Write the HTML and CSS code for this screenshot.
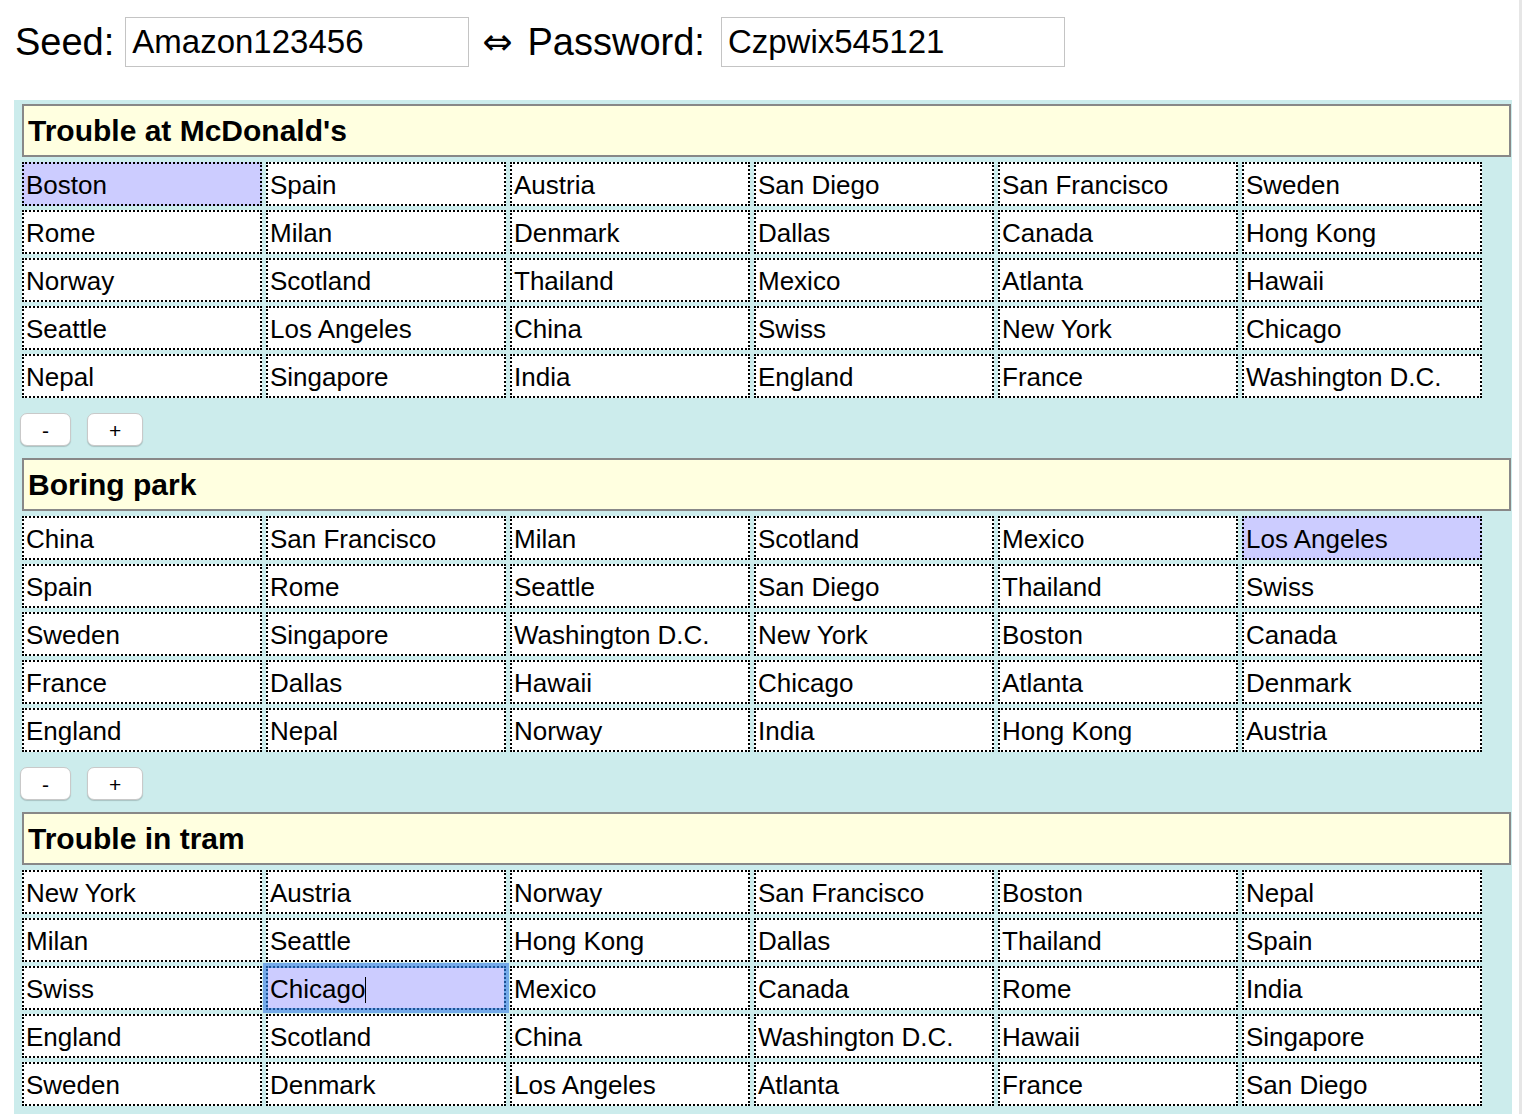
FILE: index.html
```html
<!DOCTYPE html>
<html lang="en">
<head>
<meta charset="utf-8">
<title>Seed to Password</title>
<link rel="stylesheet" href="styles.css">
</head>
<body>
<div class="topbar">
  <span class="label label-seed">Seed:</span>
  <div class="field">Amazon123456</div>
  <span class="arrow">⇔</span>
  <span class="label label-pw">Password:</span>
  <div class="field">Czpwix545121</div>
</div>

<div class="board">
  <section class="story">
    <h2 class="story-title">Trouble at McDonald's</h2>
    <div class="grid">
      <div class="cell selected">Boston</div><div class="cell">Spain</div><div class="cell">Austria</div><div class="cell">San Diego</div><div class="cell">San Francisco</div><div class="cell">Sweden</div>
      <div class="cell">Rome</div><div class="cell">Milan</div><div class="cell">Denmark</div><div class="cell">Dallas</div><div class="cell">Canada</div><div class="cell">Hong Kong</div>
      <div class="cell">Norway</div><div class="cell">Scotland</div><div class="cell">Thailand</div><div class="cell">Mexico</div><div class="cell">Atlanta</div><div class="cell">Hawaii</div>
      <div class="cell">Seattle</div><div class="cell">Los Angeles</div><div class="cell">China</div><div class="cell">Swiss</div><div class="cell">New York</div><div class="cell">Chicago</div>
      <div class="cell">Nepal</div><div class="cell">Singapore</div><div class="cell">India</div><div class="cell">England</div><div class="cell">France</div><div class="cell">Washington D.C.</div>
    </div>
    <div class="controls"><button class="btn">-</button><button class="btn">+</button></div>
  </section>

  <section class="story">
    <h2 class="story-title">Boring park</h2>
    <div class="grid">
      <div class="cell">China</div><div class="cell">San Francisco</div><div class="cell">Milan</div><div class="cell">Scotland</div><div class="cell">Mexico</div><div class="cell selected">Los Angeles</div>
      <div class="cell">Spain</div><div class="cell">Rome</div><div class="cell">Seattle</div><div class="cell">San Diego</div><div class="cell">Thailand</div><div class="cell">Swiss</div>
      <div class="cell">Sweden</div><div class="cell">Singapore</div><div class="cell">Washington D.C.</div><div class="cell">New York</div><div class="cell">Boston</div><div class="cell">Canada</div>
      <div class="cell">France</div><div class="cell">Dallas</div><div class="cell">Hawaii</div><div class="cell">Chicago</div><div class="cell">Atlanta</div><div class="cell">Denmark</div>
      <div class="cell">England</div><div class="cell">Nepal</div><div class="cell">Norway</div><div class="cell">India</div><div class="cell">Hong Kong</div><div class="cell">Austria</div>
    </div>
    <div class="controls"><button class="btn">-</button><button class="btn">+</button></div>
  </section>

  <section class="story">
    <h2 class="story-title">Trouble in tram</h2>
    <div class="grid">
      <div class="cell">New York</div><div class="cell">Austria</div><div class="cell">Norway</div><div class="cell">San Francisco</div><div class="cell">Boston</div><div class="cell">Nepal</div>
      <div class="cell">Milan</div><div class="cell">Seattle</div><div class="cell">Hong Kong</div><div class="cell">Dallas</div><div class="cell">Thailand</div><div class="cell">Spain</div>
      <div class="cell">Swiss</div><div class="cell focused">Chicago<span class="caret"></span></div><div class="cell">Mexico</div><div class="cell">Canada</div><div class="cell">Rome</div><div class="cell">India</div>
      <div class="cell">England</div><div class="cell">Scotland</div><div class="cell">China</div><div class="cell">Washington D.C.</div><div class="cell">Hawaii</div><div class="cell">Singapore</div>
      <div class="cell">Sweden</div><div class="cell">Denmark</div><div class="cell">Los Angeles</div><div class="cell">Atlanta</div><div class="cell">France</div><div class="cell">San Diego</div>
    </div>
  </section>
</div>
<div class="scroll-edge"></div>
</body>
</html>
```

FILE: styles.css
```css
html, body {
  margin: 0;
  padding: 0;
  overflow: hidden;
  background: #fff;
}

body {
  padding: 0 10px 0 14px;
  font-family: "Liberation Sans", Arial, Helvetica, sans-serif;
  color: #000;
}

.topbar {
  display: flex;
  align-items: center;
  height: 50px;
  margin-top: 17px;
  padding-left: 1px;
}

.label {
  font-size: 38px;
  line-height: 1;
}

.label-seed { margin-right: 11px; }
.label-pw { margin-right: 16px; }

.arrow {
  font-family: "DejaVu Sans", sans-serif;
  font-size: 36px;
  line-height: 1;
  margin: 0 15px 0 13px;
}

.field {
  box-sizing: border-box;
  width: 344px;
  height: 50px;
  border: 1px solid #c4c4c4;
  padding-left: 6px;
  font-size: 33px;
  line-height: 48px;
  white-space: nowrap;
}

.board {
  margin-top: 33px;
  background: #ccecec;
  padding: 4px 1px 30px 0;
}

.story {
  display: flex;
  flex-direction: column;
}

.story-title {
  margin: 0 0 0 8px;
  box-sizing: border-box;
  height: 53px;
  border: 2px solid #888;
  background: #ffffe0;
  padding-left: 4px;
  font-size: 30px;
  font-weight: bold;
  line-height: 49px;
}

.grid {
  display: grid;
  grid-template-columns: repeat(6, 240px);
  grid-auto-rows: 44px;
  gap: 4px;
  margin: 5px 0 0 8px;
}

.cell {
  box-sizing: border-box;
  border: 2px dotted #000;
  background: #fff;
  padding: 2px 0 0 2px;
  font-size: 26px;
  line-height: 38px;
  white-space: nowrap;
  overflow: hidden;
}

.cell.selected {
  background: #ccccff;
}

.cell.focused {
  border-color: #1d4f93;
  background: linear-gradient(#ccccff, #ccccff) padding-box, #74aae9 border-box;
  box-shadow: 0 0 0 3px #74aae9;
  overflow: visible;
}

.caret {
  display: inline-block;
  width: 1px;
  height: 26px;
  background: #000;
  vertical-align: -5px;
}

.controls {
  display: flex;
  gap: 16px;
  margin: 15px 0 12px 6px;
}

.btn {
  box-sizing: border-box;
  height: 33px;
  padding: 2px 21px 0;
  border: 1px solid #c9c9c9;
  border-radius: 7px;
  background: #fff;
  box-shadow: 0 1px 1px rgba(0, 0, 0, 0.18);
  font-family: "Liberation Sans", Arial, sans-serif;
  font-size: 21px;
  line-height: 1;
  color: #000;
}

.scroll-edge {
  position: fixed;
  top: 0;
  right: 0;
  bottom: 0;
  width: 3px;
  background: #e6e6e6;
}
```
